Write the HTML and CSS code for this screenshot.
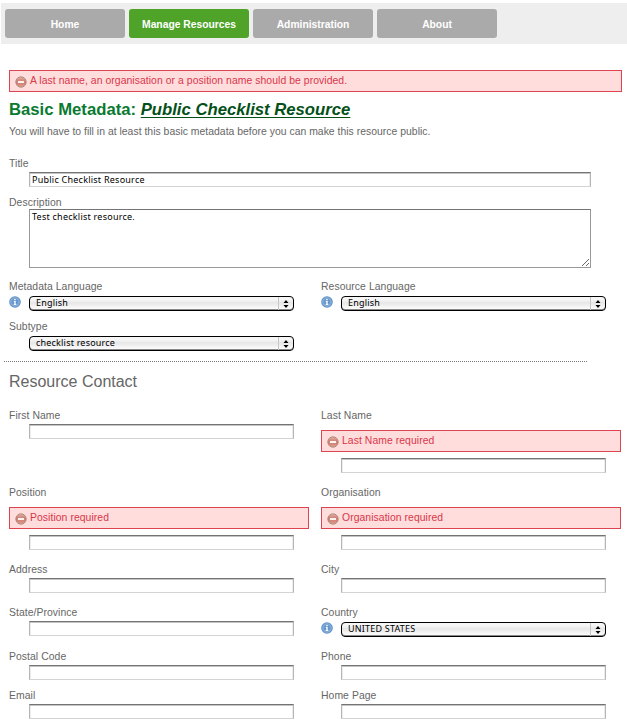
FILE: index.html
```html
<!DOCTYPE html>
<html lang="en">
<head>
<meta charset="utf-8">
<title>Basic Metadata</title>
<link rel="stylesheet" href="styles.css">
</head>
<body>
<svg class="defs" width="0" height="0">
  <defs>
    <linearGradient id="red" x1="0" y1="0" x2="0" y2="1"><stop offset="0" stop-color="#e3b3a8"/><stop offset=".5" stop-color="#cd7469"/><stop offset="1" stop-color="#e0a08f"/></linearGradient>
    <radialGradient id="blue"><stop offset="0" stop-color="#5b8dc6"/><stop offset=".65" stop-color="#6f9fd2"/><stop offset="1" stop-color="#5a8cc2"/></radialGradient>
    <symbol id="stop" viewBox="0 0 12 12"><circle cx="6" cy="6" r="5.2" fill="url(#red)" stroke="#b18e7c" stroke-width="1"/><rect x="2.5" y="4.5" width="7" height="3" rx=".4" fill="#fff3f0" stroke="#c4655c" stroke-width=".6"/></symbol>
    <symbol id="info" viewBox="0 0 12 12"><circle cx="6" cy="6" r="5.8" fill="url(#blue)"/><circle cx="6" cy="6" r="4.2" fill="none" stroke="#9dbfe3" stroke-width=".7"/><path d="M5.2 3h1.5v1.2H5.2zM4.8 5h1.9v3h.6v.9H4.7V8h.6V5.9h-.5z" fill="#fff"/></symbol>
  </defs>
</svg>
<nav class="nav">
  <a class="tab">Home</a>
  <a class="tab active">Manage Resources</a>
  <a class="tab">Administration</a>
  <a class="tab">About</a>
</nav>
<main class="page">
  <div class="error"><svg class="icon"><use href="#stop"/></svg><span>A last name, an organisation or a position name should be provided.</span></div>
  <h1>Basic Metadata: <a class="h-link">Public Checklist Resource</a></h1>
  <p class="intro">You will have to fill in at least this basic metadata before you can make this resource public.</p>
  <form>
    <div class="row wide">
      <div class="field"><label>Title</label><input class="box" value="Public Checklist Resource"></div>
    </div>
    <div class="row wide desc">
      <div class="field"><label>Description</label><textarea class="box">Test checklist resource.</textarea></div>
    </div>
    <div class="row lang">
      <div class="field"><label>Metadata Language</label><div class="pick"><svg class="icon"><use href="#info"/></svg><div class="select"><span>English</span><svg class="arrows" viewBox="0 0 5 8"><path d="M2.5 0 5 3H0zM0 5h5L2.5 8z"/></svg></div></div></div>
      <div class="field"><label>Resource Language</label><div class="pick"><svg class="icon"><use href="#info"/></svg><div class="select"><span>English</span><svg class="arrows" viewBox="0 0 5 8"><path d="M2.5 0 5 3H0zM0 5h5L2.5 8z"/></svg></div></div></div>
    </div>
    <div class="row subtype">
      <div class="field"><label>Subtype</label><div class="pick"><div class="select"><span>checklist resource</span><svg class="arrows" viewBox="0 0 5 8"><path d="M2.5 0 5 3H0zM0 5h5L2.5 8z"/></svg></div></div></div>
    </div>
    <div class="divider"></div>
    <h2>Resource Contact</h2>
    <div class="row tall">
      <div class="field"><label>First Name</label><input class="box"></div>
      <div class="field"><label>Last Name</label><div class="error"><svg class="icon"><use href="#stop"/></svg><span>Last Name required</span></div><input class="box"></div>
    </div>
    <div class="row tall">
      <div class="field"><label>Position</label><div class="error"><svg class="icon"><use href="#stop"/></svg><span>Position required</span></div><input class="box"></div>
      <div class="field"><label>Organisation</label><div class="error"><svg class="icon"><use href="#stop"/></svg><span>Organisation required</span></div><input class="box"></div>
    </div>
    <div class="row">
      <div class="field"><label>Address</label><input class="box"></div>
      <div class="field"><label>City</label><input class="box"></div>
    </div>
    <div class="row region">
      <div class="field"><label>State/Province</label><input class="box"></div>
      <div class="field"><label>Country</label><div class="pick"><svg class="icon"><use href="#info"/></svg><div class="select"><span>UNITED STATES</span><svg class="arrows" viewBox="0 0 5 8"><path d="M2.5 0 5 3H0zM0 5h5L2.5 8z"/></svg></div></div></div>
    </div>
    <div class="row tight">
      <div class="field"><label>Postal Code</label><input class="box"></div>
      <div class="field"><label>Phone</label><input class="box"></div>
    </div>
    <div class="row last">
      <div class="field"><label>Email</label><input class="box"></div>
      <div class="field"><label>Home Page</label><input class="box"></div>
    </div>
  </form>
</main>
</body>
</html>
```
FILE: styles.css
```css
* { box-sizing: border-box; }
body { margin: 0; background: #fff; color: #666; font: 10.4px/13px "Liberation Sans", Arial, sans-serif; letter-spacing: .06px; overflow: hidden; }
.defs { display: block; }
.nav { display: flex; gap: 4px; height: 41px; margin: 3px 0 0 1px; padding: 6px 4px; background: #eee; }
.tab { width: 120px; height: 29px; border-radius: 3px; background: #aaa; color: #fff; font-size: 10.3px; font-weight: bold; line-height: 31px; text-align: center; letter-spacing: 0; }
.tab.active { background: #4ea328; }
.page { width: 613px; margin: 26px 0 0 9px; }
.error { display: flex; align-items: flex-start; gap: 3px; height: 22px; padding-left: 5px; border: 1px solid #dc4452; background: #fdd; color: #d93649; white-space: nowrap; }
.error span { line-height: 19px; }
.icon { display: block; flex: none; width: 12px; height: 12px; }
.error .icon { margin-top: 5px; }
h1 { margin: 8px 0 0; color: #0a7a30; font-size: 16.7px; line-height: 20px; letter-spacing: 0; white-space: nowrap; }
.h-link { color: #045019; font-style: italic; text-decoration: underline; text-decoration-thickness: 1px; text-underline-offset: 2px; }
.intro { margin: 5px 0 0; letter-spacing: 0.02px; white-space: nowrap; }
form { margin-top: 19px; }
.row { display: grid; grid-template-columns: 300px 300px; gap: 12px; height: 43px; }
.row.wide { grid-template-columns: 600px; height: 39px; }
.row.desc { height: 84px; }
.row.lang { height: 40px; }
.row.subtype { height: 41px; }
.row.tall { height: 77px; }
.row.region { height: 44px; }
.row.tight { height: 39px; }
.row.last { height: 37px; }
.field { min-width: 0; }
label { display: block; height: 15px; }
.desc label { height: 13px; }
.box { display: block; width: 265px; height: 15px; margin: 0 0 0 20px; padding: 0 2px; border: 1px solid #b5b5b5; border-top-color: #747474; border-bottom-color: #d4d4d4; border-radius: 0; outline: 0; background: #fff; box-shadow: inset 0 1px #c4c4c4, inset 1px 0 #ededed, inset -1px 0 #ededed; color: #000; font: 9px/12px "Noto Sans", sans-serif; letter-spacing: .24px; }
.wide .box { width: 562px; }
textarea.box { height: 59px; padding: 1px 2px; border: 1px solid #999; border-top-color: #747474; box-shadow: none; }
.field .error { margin: 6px 0; }
.pick { display: flex; justify-content: flex-end; width: 285px; padding-top: 1px; gap: 8px; }
.select { display: flex; flex: none; align-items: center; justify-content: space-between; width: 265px; height: 15px; padding-left: 6px; border: 1px solid #000; border-radius: 4px; background: linear-gradient(#f6f6f6 0 20%, #e7e7e7 45%, #fff); box-shadow: inset 0 -1px #888; color: #000; font: 9px/11px "Noto Sans", sans-serif; letter-spacing: .2px; }
.select span { padding-bottom: 2px; }
.arrows { width: 15px; height: 13px; padding: 3px 4px 2px; border-left: 1px solid #c5c5c5; }
.divider { width: 583px; height: 1px; margin-left: -5px; background: repeating-linear-gradient(90deg, #777 0 1px, #fff 1px 2px); }
h2 { margin: 9px 0 17px; font-size: 16px; font-weight: normal; line-height: 21px; letter-spacing: 0; }
```
